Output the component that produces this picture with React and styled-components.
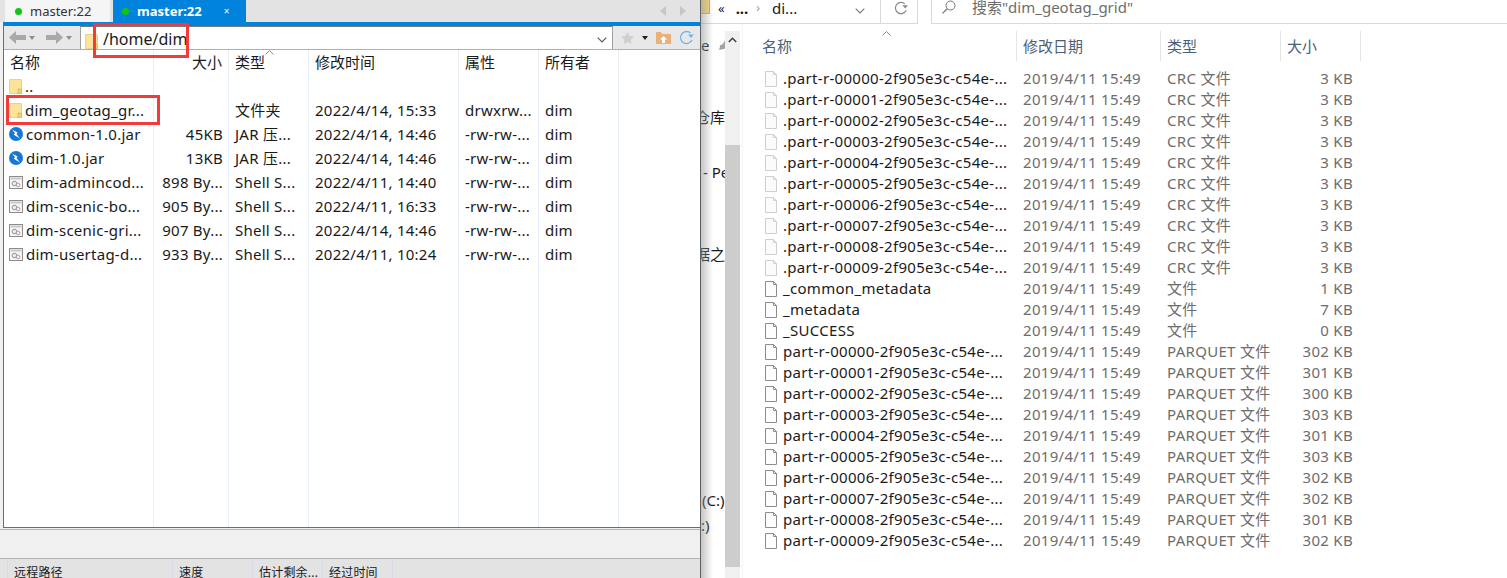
import styled, { createGlobalStyle } from "styled-components";

const GlobalStyle = createGlobalStyle`
  html, body {
    margin: 0;
    padding: 0;
    width: 1507px;
    height: 578px;
    overflow: hidden;
    background: #fff;
    font-family: "Noto Sans", "Noto Sans CJK SC", sans-serif;
    font-size: 15px;
  }
`;

const Page = styled.div`
  display: flex;
  width: 1507px;
  height: 578px;
  overflow: hidden;
`;

/* left: sftp window */
const SftpWindow = styled.div`
  position: relative;
  width: 700px;
  height: 578px;
  flex: none;
  display: flex;
  flex-direction: column;
  background: #f0f0f0;
`;

const TabBar = styled.div`
  display: flex;
  align-items: stretch;
  height: 22px;
  padding-left: 5px;
  gap: 3px;
  background: #e3e3e3;
`;

const Tab = styled.div`
  display: flex;
  align-items: center;
  gap: 8px;
  width: ${(p) => (p.$active ? "133px" : "105px")};
  box-sizing: border-box;
  padding-left: ${(p) => (p.$active ? "9px" : "10px")};
  background: ${(p) => (p.$active ? "#0083dc" : "#f5f5f5")};
  color: ${(p) => (p.$active ? "#fff" : "#333")};
  font-size: 13px;
  font-weight: ${(p) => (p.$active ? 700 : 400)};
`;

const Dot = styled.span`
  width: 7px;
  height: 7px;
  border-radius: 50%;
  background: #0fc60f;
`;

const TabClose = styled.span`
  margin-left: 14px;
  font-size: 10px;
  font-weight: 400;
`;

const TabArrows = styled.div`
  margin-left: auto;
  display: flex;
  align-items: center;
  gap: 14px;
  padding-right: 14px;
`;

const TabArrow = styled.span`
  width: 0;
  height: 0;
  border-top: 5px solid transparent;
  border-bottom: 5px solid transparent;
  ${(p) => (p.$left ? "border-right: 6px solid #c6c6c6;" : "border-left: 6px solid #c6c6c6;")}
`;

const Panel = styled.div`
  margin-left: 3px;
  border-top: 4px solid #0083dc;
  display: flex;
  flex-direction: column;
  height: 506px;
  box-sizing: border-box;
  border-left: 1px solid #2b7fc0;
  border-bottom: 1px solid #2b7fc0;
`;

const Toolbar = styled.div`
  display: flex;
  align-items: flex-end;
  height: 24px;
  background: #e8e8e8;
  flex: none;
  box-sizing: border-box;
  border-bottom: 1px solid #b0b0b0;
`;

const NavButtons = styled.div`
  width: 76px;
  height: 23px;
  display: flex;
  align-items: center;
  gap: 3px;
  padding-left: 5px;
  box-sizing: border-box;
`;

const NavSpacer = styled.span`
  width: 5px;
`;

const AddressBox = styled.div`
  width: 533px;
  height: 23px;
  box-sizing: border-box;
  background: #fff;
  border-top: 1px solid #7a7a7a;
  border-left: 1px solid #a0a0a0;
  border-right: 1px solid #a0a0a0;
  display: flex;
  align-items: flex-end;
  padding-left: 4px;
  gap: 5px;
  font-size: 16px;
  line-height: 20px;
  color: #1a1a1a;
`;

const AddressChevron = styled.span`
  margin-left: auto;
  margin-right: 5px;
  margin-bottom: 6px;
  display: flex;
`;

const ToolIcons = styled.div`
  display: flex;
  align-items: center;
  height: 23px;
  gap: 8px;
  padding-left: 8px;
`;

const FileTable = styled.div`
  flex: 1;
  position: relative;
  display: grid;
  grid-template-columns: 150px 75px 80px 150px 80px 80px 1fr;
  grid-auto-rows: 24px;
  align-content: start;
  background: #fff;
  overflow: hidden;
`;

const ColumnLines = styled.div`
  position: absolute;
  inset: 0;
  display: grid;
  grid-template-columns: 150px 75px 80px 150px 80px 80px 1fr;
  pointer-events: none;
`;

const ColumnLine = styled.div`
  border-right: 1px solid ${(p) => (p.$last ? "transparent" : "#e6effb")};
`;

const HeadCell = styled.div`
  position: relative;
  display: flex;
  align-items: center;
  justify-content: ${(p) => (p.$right ? "flex-end" : "flex-start")};
  padding: ${(p) => (p.$right ? "0 6px 2px 0" : "0 0 2px 6px")};
  box-sizing: border-box;
  color: #1a1a1a;
  background: #fff;
  border-right: 1px solid ${(p) => (p.$last ? "transparent" : "#ececec")};
  height: 24px;
  font-size: 15px;
`;

const Cell = styled.div`
  display: flex;
  align-items: center;
  justify-content: ${(p) => (p.$right ? "flex-end" : "flex-start")};
  padding: ${(p) => (p.$right ? "0 6px 0 0" : "0 0 0 6px")};
  color: #1a1a1a;
  white-space: nowrap;
  overflow: hidden;
  font-size: 15px;
  line-height: 20px;
  letter-spacing: 0.25px;
`;

const NameCell = styled(Cell)`
  padding-left: 5px;
  gap: 3px;
`;

const SortCaret = styled.svg`
  position: absolute;
  top: ${(p) => p.$y}px;
  left: ${(p) => p.$x}px;
`;

const StatusPanel = styled.div`
  flex: 1;
  background: #f0f0f0;
  margin-top: 1px;
  border-top: 1px solid #b4b4b4;
`;

const TransferHead = styled.div`
  height: 20px;
  flex: none;
  display: grid;
  grid-template-columns: 8px 165px 80px 70px 70px 1fr;
  background: #e3e3e3;
  border-top: 1px solid #b4b4b4;
  box-sizing: border-box;
  overflow: hidden;
`;

const TransferCell = styled.div`
  padding-left: 6px;
  border-right: 1px solid #d6dce6;
  line-height: 27px;
  font-size: 12px;
  letter-spacing: 0.2px;
  color: #1a1a1a;
  white-space: nowrap;
`;

const RedBox = styled.div`
  position: absolute;
  left: ${(p) => p.$x}px;
  top: ${(p) => p.$y}px;
  width: ${(p) => p.$w}px;
  height: ${(p) => p.$h}px;
  box-sizing: border-box;
  border: 3px solid #f23c3c;
  pointer-events: none;
`;

/* right: windows explorer */
const ExplorerPane = styled.div`
  position: relative;
  flex: 1;
  display: flex;
  flex-direction: column;
  background: #fff;
  border-left: 1px solid #5c6268;

  &::after {
    content: "";
    position: absolute;
    top: 0;
    left: 0;
    bottom: 0;
    width: 12px;
    background: linear-gradient(to right, rgba(150, 150, 150, 0.55), rgba(255, 255, 255, 0));
    pointer-events: none;
  }
`;

const TopBar = styled.div`
  display: flex;
  height: 24px;
  flex: none;
  align-items: center;
`;

const AddressBar = styled.div`
  width: 217px;
  height: 24px;
  box-sizing: border-box;
  border-right: 1px solid #d9d9d9;
  border-bottom: 1px solid #d9d9d9;
  display: flex;
  align-items: center;
  position: relative;
  font-size: 15px;
  color: #1a1a1a;
`;

const CrumbFolder = styled.span`
  width: 8px;
  height: 14px;
  background: #f5d77e;
  border-right: 1px solid #d6b04a;
  border-bottom: 1px solid #d6b04a;
  margin-top: -10px;
`;

const Crumb = styled.span`
  margin-left: ${(p) => p.$gap}px;
  margin-top: -8px;
  font-size: ${(p) => p.$size || 15}px;
  font-weight: ${(p) => p.$weight || 400};
  color: ${(p) => p.$color || "#1a1a1a"};
`;

const RefreshSlot = styled.div`
  width: 37px;
  height: 24px;
  margin-left: auto;
  border-left: 1px solid #d9d9d9;
  display: flex;
  align-items: center;
  justify-content: center;
  padding: 0 0 8px 3px;
  box-sizing: border-box;
`;

const SearchBox = styled.div`
  margin-left: 13px;
  flex: 1;
  height: 24px;
  box-sizing: border-box;
  border-left: 1px solid #d9d9d9;
  border-bottom: 1px solid #d9d9d9;
  display: flex;
  align-items: center;
  gap: 16px;
  padding: 0 0 10px 10px;
  color: #6d6d6d;
  font-size: 15px;
`;

const ExplorerBody = styled.div`
  flex: 1;
  display: flex;
  min-height: 0;
`;

const NavClip = styled.div`
  width: 24px;
  flex: none;
  overflow: hidden;
  display: flex;
  flex-direction: column;
`;

const NavItem = styled.div`
  display: flex;
  align-items: center;
  height: 20px;
  margin-top: ${(p) => p.$gap}px;
  margin-left: ${(p) => p.$pad}px;
  white-space: nowrap;
  color: #1a1a1a;
  font-size: 15px;
`;

const PinSlot = styled.span`
  margin-left: 9px;
  display: flex;
`;

const ScrollTrack = styled.div`
  width: 15px;
  flex: none;
  margin-top: 7px;
  background: #f0f0f0;
  display: flex;
  flex-direction: column;
`;

const ScrollUp = styled.div`
  height: 17px;
  display: flex;
  align-items: center;
  justify-content: center;
  flex: none;
`;

const ScrollThumb = styled.div`
  height: 422px;
  margin-top: 97px;
  background: #cdcdcd;
`;

const FileList = styled.div`
  flex: 1;
  margin-left: 2px;
  padding-top: 7px;
  border-left: 1px solid #f5f5f5;
`;

const ListHead = styled.div`
  display: grid;
  grid-template-columns: 274px 144px 120px 80px;
  height: 30px;
  margin-bottom: 7px;
  position: relative;
`;

const ListHeadCell = styled.div`
  display: flex;
  align-items: center;
  padding-left: ${(p) => (p.$first ? 19 : 6)}px;
  padding-bottom: 2px;
  box-sizing: border-box;
  border-right: 1px solid #e5e5e5;
  color: #4c607a;
  font-size: 15px;
`;

const ListRow = styled.div`
  display: grid;
  grid-template-columns: 274px 144px 120px 72px;
  height: 21px;
  align-items: center;
  font-size: 15px;
  line-height: 21px;
  letter-spacing: 0.3px;
`;

const ListName = styled.div`
  display: flex;
  align-items: center;
  gap: 6px;
  padding-left: 22px;
  color: #1a1a1a;
  white-space: nowrap;
`;

const ListCell = styled.div`
  padding-left: 6px;
  color: #6d6d6d;
  white-space: nowrap;
`;

const ListSize = styled(ListCell)`
  text-align: right;
`;

/* icons */
const FolderIcon = () => (
  <svg width="13" height="16" viewBox="0 0 13 16">
    <path d="M.5 1.500h12v14H.5z" fill="#fbe39c" stroke="#ecd289" />
    <path d="M9 11h3.500v4.500H9z" fill="#f5cf6b" stroke="#e0b850" strokeWidth=".8" />
  </svg>
);

const JarIcon = () => (
  <svg width="14" height="14" viewBox="0 0 14 14">
    <circle cx="7" cy="7" r="7" fill="#1677d6" />
    <path d="M3.200 2.500l5.600 3.300-1.400 1 3.400 4.700-6.200-3.900 1.500-1.200z" fill="#fff" />
  </svg>
);

const ScriptIcon = () => (
  <svg width="14" height="13" viewBox="0 0 14 13">
    <rect x=".5" y=".5" width="13" height="12" fill="#f4f4f4" stroke="#8d8d8d" />
    <rect x="1.500" y="1.500" width="11" height="2" fill="#c9c9c9" />
    <circle cx="5.500" cy="7.500" r="2.200" fill="none" stroke="#8a8a8a" />
    <circle cx="9" cy="9" r="1.800" fill="none" stroke="#a5a5a5" />
  </svg>
);

const DocIcon = ({ $light }) => (
  <svg width="12" height="16" viewBox="0 0 12 16">
    <path
      d="M.5.5h8l3 3v12H.5z"
      fill={$light ? "#fbfbfb" : "#fdfdfd"}
      stroke={$light ? "#cfcfcf" : "#8c8c8c"}
    />
    <path d="M8.500.5v3h3" fill="none" stroke={$light ? "#cfcfcf" : "#8c8c8c"} />
  </svg>
);

const ArrowSvg = styled.svg`
  transform: ${(p) => (p.$flip ? "scaleX(-1)" : "none")};
`;

const BackArrow = ({ flip }) => (
  <ArrowSvg $flip={flip} width="17" height="13" viewBox="0 0 17 13">
    <path d="M7 0v4h10v5H7v4L0 6.500z" fill="#a9a9a9" />
  </ArrowSvg>
);

const SmallCaret = ({ color = "#8f8f8f" }) => (
  <svg width="6" height="4" viewBox="0 0 6 4">
    <path d="M0 0h6L3 4z" fill={color} />
  </svg>
);

const Chevron = ({ color = "#555" }) => (
  <svg width="10" height="6" viewBox="0 0 10 6">
    <path d="M.7.7L5 5l4.300-4.300" fill="none" stroke={color} strokeWidth="1.100" />
  </svg>
);

const StarIcon = () => (
  <svg width="13" height="12" viewBox="0 0 13 12">
    <path d="M6.500 0l2 4 4.500.6-3.300 3.100.8 4.300-4-2.100-4 2.100.8-4.300L0 4.600 4.500 4z" fill="#cfcfcf" />
  </svg>
);

const UpFolderIcon = () => (
  <svg width="15" height="12" viewBox="0 0 15 12">
    <path d="M0 0h5l1 2h9v10H0z" fill="#e8b27c" />
    <path d="M7.500 4l3.500 3.500H9V11H6V7.500H4z" fill="#fff" />
  </svg>
);

const RefreshIcon = ({ color = "#6fb2ea", size = 15 }) => (
  <svg width={size} height={size} viewBox="0 0 15 15">
    <path d="M13 10A6 6 0 1 1 11.500 3" fill="none" stroke={color} strokeWidth="1.300" />
    <path d="M9 4.500h6L12 8z" fill={color} />
  </svg>
);

const SearchIcon = () => (
  <svg width="14" height="14" viewBox="0 0 14 14">
    <circle cx="8.500" cy="5.500" r="4.500" fill="none" stroke="#777" />
    <path d="M5.200 8.800L.6 13.400" stroke="#777" strokeWidth="1.300" />
  </svg>
);

const PinIcon = () => (
  <svg width="11" height="11" viewBox="0 0 11 11">
    <path d="M6.500.5l4 4-1.500.6-2 2-.3 2-1.400-.2L1 10l1-3.500-.2-1.300 2-.4 2-2z" fill="#a3a3a3" />
  </svg>
);

const remoteFiles = [
  { icon: "folder", name: "..", size: "", type: "", time: "", attr: "", owner: "" },
  { icon: "folder", name: "dim_geotag_gr...", size: "", type: "文件夹", time: "2022/4/14, 15:33", attr: "drwxrw...", owner: "dim" },
  { icon: "jar", name: "common-1.0.jar", size: "45KB", type: "JAR 压...", time: "2022/4/14, 14:46", attr: "-rw-rw-...", owner: "dim" },
  { icon: "jar", name: "dim-1.0.jar", size: "13KB", type: "JAR 压...", time: "2022/4/14, 14:46", attr: "-rw-rw-...", owner: "dim" },
  { icon: "script", name: "dim-admincod...", size: "898 By...", type: "Shell S...", time: "2022/4/11, 14:40", attr: "-rw-rw-...", owner: "dim" },
  { icon: "script", name: "dim-scenic-bo...", size: "905 By...", type: "Shell S...", time: "2022/4/11, 16:33", attr: "-rw-rw-...", owner: "dim" },
  { icon: "script", name: "dim-scenic-gri...", size: "907 By...", type: "Shell S...", time: "2022/4/14, 14:46", attr: "-rw-rw-...", owner: "dim" },
  { icon: "script", name: "dim-usertag-d...", size: "933 By...", type: "Shell S...", time: "2022/4/11, 10:24", attr: "-rw-rw-...", owner: "dim" },
];

const remoteIcons = { folder: FolderIcon, jar: JarIcon, script: ScriptIcon };

const crcSizes = Array.from({ length: 10 }, (_, i) => ({
  name: `.part-r-0000${i}-2f905e3c-c54e-...`,
  type: "CRC 文件",
  size: "3 KB",
  light: true,
}));

const parquetSizes = [302, 301, 300, 303, 301, 303, 302, 302, 301, 302];

const localFiles = [
  ...crcSizes,
  { name: "_common_metadata", type: "文件", size: "1 KB" },
  { name: "_metadata", type: "文件", size: "7 KB" },
  { name: "_SUCCESS", type: "文件", size: "0 KB" },
  ...parquetSizes.map((s, i) => ({
    name: `part-r-0000${i}-2f905e3c-c54e-...`,
    type: "PARQUET 文件",
    size: `${s} KB`,
  })),
];

function SftpPanel() {
  return (
    <SftpWindow>
      <TabBar>
        <Tab>
          <Dot />
          master:22
        </Tab>
        <Tab $active>
          <Dot />
          master:22
          <TabClose>×</TabClose>
        </Tab>
        <TabArrows>
          <TabArrow $left />
          <TabArrow />
        </TabArrows>
      </TabBar>
      <Panel>
        <Toolbar>
          <NavButtons>
            <BackArrow />
            <SmallCaret />
            <NavSpacer />
            <BackArrow flip />
            <SmallCaret />
          </NavButtons>
          <AddressBox>
            <FolderIcon />
            /home/dim
            <AddressChevron>
              <Chevron />
            </AddressChevron>
          </AddressBox>
          <ToolIcons>
            <StarIcon />
            <SmallCaret color="#222" />
            <UpFolderIcon />
            <RefreshIcon />
          </ToolIcons>
        </Toolbar>
        <FileTable>
          <ColumnLines>
            <ColumnLine />
            <ColumnLine />
            <ColumnLine />
            <ColumnLine />
            <ColumnLine />
            <ColumnLine />
            <ColumnLine $last />
          </ColumnLines>
          <HeadCell>名称</HeadCell>
          <HeadCell $right>大小</HeadCell>
          <HeadCell>
            类型
            <SortCaret $x={36} $y={0} width="9" height="5" viewBox="0 0 9 5">
              <path d="M.5 4.500L4.500.5l4 4" fill="none" stroke="#8a8a8a" />
            </SortCaret>
          </HeadCell>
          <HeadCell>修改时间</HeadCell>
          <HeadCell>属性</HeadCell>
          <HeadCell>所有者</HeadCell>
          <HeadCell $last />
          {remoteFiles.map((f) => {
            const Icon = remoteIcons[f.icon];
            return [
              <NameCell key={f.name}>
                <Icon />
                {f.name}
              </NameCell>,
              <Cell key={f.name + "s"} $right>{f.size}</Cell>,
              <Cell key={f.name + "t"}>{f.type}</Cell>,
              <Cell key={f.name + "m"}>{f.time}</Cell>,
              <Cell key={f.name + "a"}>{f.attr}</Cell>,
              <Cell key={f.name + "o"}>{f.owner}</Cell>,
              <Cell key={f.name + "e"} />,
            ];
          })}
        </FileTable>
      </Panel>
      <StatusPanel />
      <TransferHead>
        <TransferCell />
        <TransferCell>远程路径</TransferCell>
        <TransferCell>速度</TransferCell>
        <TransferCell>估计剩余...</TransferCell>
        <TransferCell>经过时间</TransferCell>
      </TransferHead>
      <RedBox $x={93} $y={23} $w={96} $h={35} />
      <RedBox $x={6} $y={95} $w={154} $h={30} />
    </SftpWindow>
  );
}

function ExplorerPanel() {
  return (
    <ExplorerPane>
      <TopBar>
        <AddressBar>
          <CrumbFolder />
          <Crumb $gap={8} $size={13}>«</Crumb>
          <Crumb $gap={11} $weight={700}>...</Crumb>
          <Crumb $gap={8} $size={12} $color="#999">›</Crumb>
          <Crumb $gap={12}>di...</Crumb>
          <Crumb $gap={58}>
            <Chevron color="#777" />
          </Crumb>
          <RefreshSlot>
            <RefreshIcon color="#8a8a8a" size={14} />
          </RefreshSlot>
        </AddressBar>
        <SearchBox>
          <SearchIcon />
          搜索"dim_geotag_grid"
        </SearchBox>
      </TopBar>
      <ExplorerBody>
        <NavClip>
          <NavItem $gap={11} $pad={0}>
            e
            <PinSlot>
              <PinIcon />
            </PinSlot>
          </NavItem>
          <NavItem $gap={51} $pad={-6}>仓库</NavItem>
          <NavItem $gap={36} $pad={2}>- Pe</NavItem>
          <NavItem $gap={61} $pad={-6}>据之</NavItem>
          <NavItem $gap={227} $pad={1}>(C:)</NavItem>
          <NavItem $gap={5} $pad={0}>:)</NavItem>
        </NavClip>
        <ScrollTrack>
          <ScrollUp>
            <svg width="9" height="6" viewBox="0 0 9 6">
              <path d="M.8 5L4.500 1.300 8.200 5" fill="none" stroke="#444" strokeWidth="1.600" />
            </svg>
          </ScrollUp>
          <ScrollThumb />
        </ScrollTrack>
        <FileList>
          <ListHead>
            <SortCaret $x={139} $y={0} width="9" height="5" viewBox="0 0 9 5">
              <path d="M.5 4.500L4.500.5l4 4" fill="none" stroke="#8a8a8a" />
            </SortCaret>
            <ListHeadCell $first>名称</ListHeadCell>
            <ListHeadCell>修改日期</ListHeadCell>
            <ListHeadCell>类型</ListHeadCell>
            <ListHeadCell>大小</ListHeadCell>
          </ListHead>
          {localFiles.map((f) => (
            <ListRow key={f.name}>
              <ListName>
                <DocIcon $light={f.light} />
                {f.name}
              </ListName>
              <ListCell>2019/4/11 15:49</ListCell>
              <ListCell>{f.type}</ListCell>
              <ListSize>{f.size}</ListSize>
            </ListRow>
          ))}
        </FileList>
      </ExplorerBody>
    </ExplorerPane>
  );
}

export default function App() {
  return (
    <Page>
      <GlobalStyle />
      <SftpPanel />
      <ExplorerPanel />
    </Page>
  );
}
